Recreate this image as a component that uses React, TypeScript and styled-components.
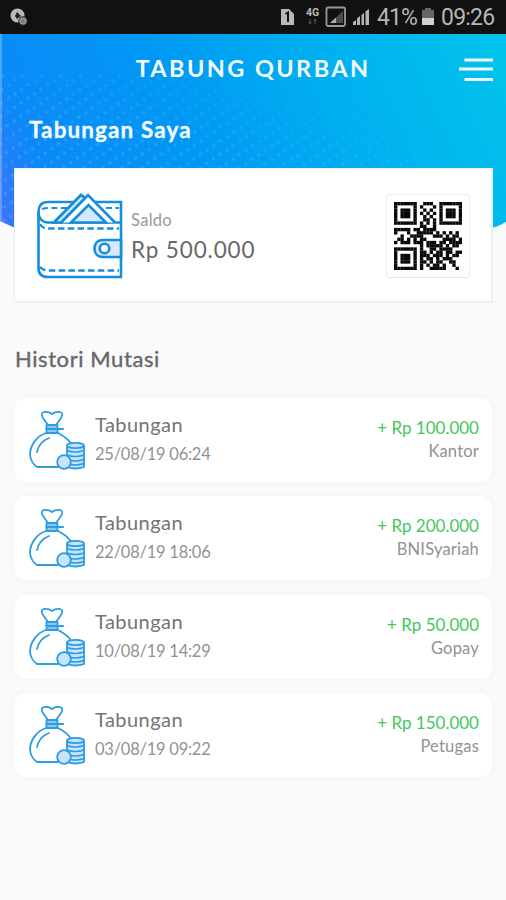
import React from 'react';
import styled, { createGlobalStyle } from 'styled-components';

const GlobalStyle = createGlobalStyle`
  * { box-sizing: border-box; }
  body { margin: 0; background: #f9fafc; font-family: Lato, 'Noto Sans', sans-serif; }
`;

const Screen = styled.div`
  position: relative;
  width: 506px;
  height: 900px;
  overflow: hidden;
  background: #f9fafc;
  display: flex;
  flex-direction: column;
`;

const StatusBar = styled.div`
  position: relative;
  height: 34px;
  flex: none;
  background: #111;
  display: flex;
  align-items: center;
  justify-content: space-between;
  padding: 0 11px 0 9px;
`;

const StatusGroup = styled.div`
  display: flex;
  align-items: center;
  height: 34px;
`;

const StatusText = styled.span<{ $w: number; $ml: number; $ls: number }>`
  width: ${p => p.$w}px;
  margin-left: ${p => p.$ml}px;
  letter-spacing: ${p => p.$ls}px;
  font: 400 23px/34px Roboto, sans-serif;
  color: #b7b7b7;
  white-space: nowrap;
  padding-top: 2px;
`;

const Backdrop = styled.svg`
  position: absolute;
  left: 0;
  top: 34px;
`;

const TopBar = styled.header`
  position: relative;
  height: 68px;
  flex: none;
  display: grid;
  grid-template-columns: 1fr auto 1fr;
  align-items: center;
  padding-right: 13px;
  padding-left: 13px;
`;

const Title = styled.h1`
  grid-column: 2;
  margin: 0;
  font-size: 23.5px;
  line-height: 66px;
  font-weight: 700;
  letter-spacing: 2.4px;
  color: #f1fbff;
  white-space: nowrap;
`;

const MenuButton = styled.button`
  justify-self: end;
  padding: 0;
  border: 0;
  background: none;
  width: 34px;
  height: 24px;
  margin-top: 4px;
`;

const Greeting = styled.h2`
  position: relative;
  margin: 0;
  padding: 13px 0 0 29px;
  height: 66px;
  flex: none;
  font-size: 22.5px;
  line-height: 30px;
  font-weight: 700;
  letter-spacing: 1.1px;
  color: #f4fbff;
  -webkit-text-stroke: 0.3px #f4fbff;
`;

const BalanceCard = styled.section`
  position: relative;
  margin: 0 13px 0 14px;
  height: 135px;
  flex: none;
  background: #fff;
  border: 1px solid #edf0f2;
  border-bottom-width: 2px;
  border-right-width: 2px;
  display: flex;
  align-items: flex-start;
  padding: 24px 21px 0 22px;
`;

const BalanceText = styled.div`
  flex: 1;
  padding: 16px 0 0 8px;
`;

const BalanceLabel = styled.div`
  font-size: 16.5px;
  line-height: 22px;
  letter-spacing: 0.3px;
  color: #999;
`;

const BalanceValue = styled.div`
  margin-top: 4px;
  font-size: 22.5px;
  line-height: 30px;
  letter-spacing: 0.85px;
  color: #686868;
`;

const QrFrame = styled.div`
  width: 84px;
  height: 84px;
  margin-top: 1px;
  padding: 7px;
  border: 1px solid #e6f0f8;
  border-bottom-color: #d5e7f4;
  border-radius: 3px;
  background: #fff;
`;

const SectionTitle = styled.h3`
  margin: 40px 0 0 15px;
  height: 55px;
  flex: none;
  font-size: 22px;
  line-height: 32px;
  font-weight: 400;
  letter-spacing: 0.58px;
  color: #686868;
  -webkit-text-stroke: 0.4px #686868;
`;

const History = styled.ul`
  list-style: none;
  margin: 0 14px;
  padding: 0;
  display: flex;
  flex-direction: column;
  gap: 14.4px;
`;

const Entry = styled.li`
  height: 84px;
  border-radius: 12px;
  background: #fff;
  box-shadow: 0 0 7px rgba(70, 90, 110, 0.045);
  display: flex;
  padding: 12px 13px 0 15px;
`;

const EntryInfo = styled.div`
  flex: 1;
  padding-left: 9px;
`;

const EntryName = styled.div`
  font-size: 20px;
  line-height: 28px;
  letter-spacing: 0.45px;
  color: #747474;
`;

const EntryDate = styled.div`
  margin-top: 3px;
  font-size: 16.5px;
  line-height: 26px;
  letter-spacing: -0.25px;
  color: #929292;
`;

const EntrySide = styled.div`
  padding-top: 6px;
  text-align: right;
  white-space: nowrap;
`;

const Amount = styled.div`
  font-size: 17px;
  line-height: 24px;
  color: #43c75c;
`;

const Source = styled.div`
  font-size: 16.5px;
  line-height: 23px;
  letter-spacing: 0.2px;
  color: #929292;
`;

const ENTRIES = [
  { date: '25/08/19 06:24', amount: '+ Rp 100.000', source: 'Kantor' },
  { date: '22/08/19 18:06', amount: '+ Rp 200.000', source: 'BNISyariah' },
  { date: '10/08/19 14:29', amount: '+ Rp 50.000', source: 'Gopay' },
  { date: '03/08/19 09:22', amount: '+ Rp 150.000', source: 'Petugas' },
];

const QR_ROWS = [
  '#######..###..#######',
  '#.....#.#...#.#.....#',
  '#.###.#..#.#..#.###.#',
  '#.###.#.#.#.#.#.###.#',
  '#.###.#..#.#..#.###.#',
  '#.....#..##.#.#.....#',
  '#######.#.#.#.#######',
  '........##..#........',
  '#####.##.####........',
  '#...#..#####.#.#.#.#.',
  '..#..####...###.#.##.',
  '.##.#.#.##.....####.#',
  '#.###.###.###.##.####',
  '........#.#####.#.##.',
  '#######.#..##.####...',
  '#.....#.##.#.##.##.##',
  '#.###.#.###.###.#.##.',
  '#.###.#.#.##.#.###...',
  '#.###.#.##.#.##..##..',
  '#.....#.#.#.##.#..#..',
  '#######.#..#####...#.',
];

function QrCode() {
  return (
    <svg width="68" height="68" viewBox="0 0 21 21" shapeRendering="geometricPrecision">
      {QR_ROWS.flatMap((row, y) =>
        [...row].map((c, x) =>
          c === '#' ? <rect key={`${x}-${y}`} x={x} y={y} width="1.04" height="1.04" fill="#080808" /> : null
        )
      )}
    </svg>
  );
}

function Wallet() {
  return (
    <svg width="86" height="86" viewBox="0 0 86 86" fill="none" stroke="#168edb" strokeWidth="2.6">
      <path d="M84 9H11C4 9 1.5 13 1.5 19V75C1.5 81 5 84 11 84H84Z" />
      <path d="M1.5 19C1.5 25 5 29.5 11 29.5H84" />
      <path d="M5 16Q8 15 11 15H31M69 15H82" strokeWidth="2" strokeDasharray="6 3.5" />
      <path d="M17 29.5L44 2L48 5M24 29.5L51 2L78 29.5" fill="#fff" />
      <path d="M17 29.5L44 2L48 5L24 29.5Z" fill="#d6eafb" />
      <path d="M34 29.5L51.5 12L69 29.5Z" fill="#d2e8fb" />
      <path d="M3 31Q5 35.5 11 35.5H82M3 74Q6 77.5 11 77.5H82" strokeWidth="2.3" strokeDasharray="6.5 3.3" />
      <path d="M84 47H66C60 47 57.5 51 57.5 55.5S60 64 66 64H84Z" fill="#d6eafb" />
      <circle cx="67.5" cy="55.5" r="4.8" fill="#fff" />
    </svg>
  );
}

function MoneyBag() {
  return (
    <svg width="57" height="60" viewBox="0 0 57 60" fill="none" stroke="#2c9ce4" strokeWidth="1.8" strokeLinejoin="round" strokeLinecap="round">
      <path d="M19 15L14 8Q11 3 15 2Q20 1.5 23 4Q26 1.5 31 2Q35 3 32 8L27 15" />
      <path d="M17.5 15H28.5V23H17.5Z" fill="#8ec6f3" />
      <path d="M17.5 19H34" strokeWidth="2.2" />
      <path d="M17 23C8 26 1 35 1 45Q2 53 8 57H29M29 23Q39 28 43 35" />
      <path d="M8 42Q10 32 20 28" />
      <path d="M38 36V57Q46 60 55 57V36Z" fill="#c9e4fa" />
      <ellipse cx="46.5" cy="35.5" rx="8.5" ry="2.6" fill="#c9e4fa" />
      <path d="M38 40.5Q46 43.5 55 40.5M38 45Q46 48 55 45M38 49.5Q46 52.5 55 49.5M38 53.5Q46 56.5 55 53.5" strokeWidth="1.5" />
      <circle cx="35" cy="52" r="6.8" fill="#c9e4fa" />
    </svg>
  );
}

function HeaderBackdrop() {
  return (
    <Backdrop width="506" height="200" viewBox="0 0 506 200">
      <defs>
        <linearGradient id="sky" gradientUnits="userSpaceOnUse" x1="-40" y1="200" x2="460" y2="-40">
          <stop offset="0" stopColor="#4a63fb" />
          <stop offset="0.08" stopColor="#3a74fb" />
          <stop offset="0.19" stopColor="#0b8af7" />
          <stop offset="0.45" stopColor="#0098f4" />
          <stop offset="0.7" stopColor="#00aef0" />
          <stop offset="1" stopColor="#02c1eb" />
        </linearGradient>
        <pattern id="dots" width="8" height="11" patternUnits="userSpaceOnUse" patternTransform="rotate(-34)">
          <circle cx="3" cy="3" r="1.7" fill="#8fd2ff" />
        </pattern>
        <linearGradient id="fade" x1="0" y1="1" x2="0.75" y2="0">
          <stop offset="0" stopColor="#fff" stopOpacity="0.28" />
          <stop offset="0.6" stopColor="#fff" stopOpacity="0.2" />
          <stop offset="1" stopColor="#fff" stopOpacity="0" />
        </linearGradient>
        <mask id="dotMask"><rect y="40" width="420" height="160" fill="url(#fade)" /></mask>
      </defs>
      <path d="M0 0H506V188Q499 192 492 194H15L0 187Z" fill="url(#sky)" />
      <path d="M0 40H420V194H15L0 187Z" fill="url(#dots)" mask="url(#dotMask)" />
      <rect width="2" height="187" fill="#fff" opacity="0.25" />
    </Backdrop>
  );
}

function StatusIcons() {
  return (
    <svg width="94" height="24" viewBox="0 0 94 24">
      <path d="M2 4H10L15 9V20H2Z" fill="#b9b9b9" />
      <path d="M6.5 9L9 7.5V17" fill="none" stroke="#111" strokeWidth="2" />
      <text x="27" y="11" fontFamily="Roboto" fontSize="10.5" fontWeight="700" fill="#b9b9b9">4G</text>
      <path d="M31 14V19M29.5 17L31 19L32.5 17M36 19V14M34.5 16L36 14L37.5 16" stroke="#555" fill="none" />
      <rect x="47.5" y="2.5" width="18.5" height="18.5" rx="1.5" fill="none" stroke="#999" strokeWidth="1.8" />
      <path d="M51 18L64 6V18Z" fill="#4a4a4a" />
      <path d="M51 18L57 12.5V18Z" fill="#aaa" />
      <path d="M74 20V17L77 15V20ZM78 20V13.5L81 11V20ZM82.5 20V10L85 8V20ZM86.5 20V6.5L90 4V20Z" fill="#b5b5b5" />
    </svg>
  );
}

export default function App() {
  return (
    <Screen>
      <GlobalStyle />
      <HeaderBackdrop />
      <StatusBar>
        <svg width="20" height="20" viewBox="0 0 20 20">
          <circle cx="8.5" cy="8.5" r="7" fill="#b9b9b9" />
          <path d="M8 5L12 9L8 12L6 9Z" fill="#222" />
          <circle cx="14" cy="14" r="4.2" fill="#999" stroke="#222" />
          <path d="M12.5 13H15.5M12.5 15H15.5" stroke="#555" />
        </svg>
        <StatusGroup>
          <StatusIcons />
          <StatusText $w={45} $ml={4} $ls={-0.9}>41%</StatusText>
          <svg width="12" height="18" viewBox="0 0 12 18">
            <path d="M3 0H9V2H12V10H0V2H3Z" fill="#666" />
            <path d="M0 10H12V17H0Z" fill="#d2d2d2" />
          </svg>
          <StatusText $w={54} $ml={7} $ls={-0.8}>09:26</StatusText>
        </StatusGroup>
      </StatusBar>
      <TopBar>
        <Title>TABUNG QURBAN</Title>
        <MenuButton aria-label="Menu">
          <svg width="34" height="24" viewBox="0 0 34 24" stroke="#effcff" strokeWidth="3">
            <path d="M5.5 2H34M0 11H34M5.5 21.5H34" />
          </svg>
        </MenuButton>
      </TopBar>
      <Greeting>Tabungan Saya</Greeting>
      <BalanceCard>
        <Wallet />
        <BalanceText>
          <BalanceLabel>Saldo</BalanceLabel>
          <BalanceValue>Rp 500.000</BalanceValue>
        </BalanceText>
        <QrFrame><QrCode /></QrFrame>
      </BalanceCard>
      <SectionTitle>Histori Mutasi</SectionTitle>
      <History>
        {ENTRIES.map(e => (
          <Entry key={e.date}>
            <MoneyBag />
            <EntryInfo>
              <EntryName>Tabungan</EntryName>
              <EntryDate>{e.date}</EntryDate>
            </EntryInfo>
            <EntrySide>
              <Amount>{e.amount}</Amount>
              <Source>{e.source}</Source>
            </EntrySide>
          </Entry>
        ))}
      </History>
    </Screen>
  );
}
